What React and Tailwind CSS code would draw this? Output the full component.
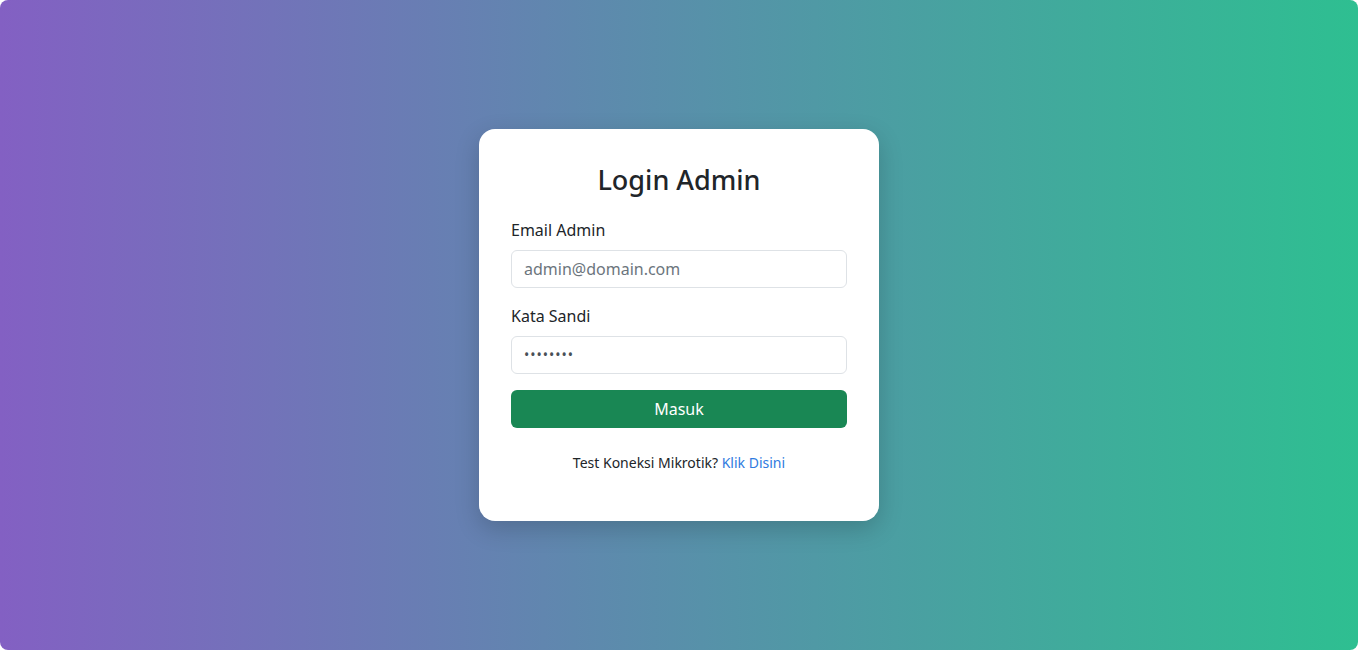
import React, { useState } from 'react';

export default function App() {
  const [email, setEmail] = useState('');
  const [password, setPassword] = useState('rahasia1');

  const handleSubmit = (e) => {
    e.preventDefault();
  };

  return (
    <div className="h-[650px] w-full bg-white" style={{ fontFamily: '"Noto Sans", "Open Sans", sans-serif' }}>
      <div className="flex h-full w-full items-center justify-center rounded-lg bg-[linear-gradient(to_right,#8360c3,#2ebf91)]">
        <div className="w-[400px] rounded-2xl bg-white p-8 shadow-[0_8px_24px_rgba(0,0,0,0.18)]">
          <h3 className="mt-[3px] mb-[21px] text-center text-[27px] leading-[1.2] font-medium text-[#212529]">Login Admin</h3>
          <form onSubmit={handleSubmit}>
            <div className="mb-4">
              <label className="mb-2 block text-base leading-6 text-[#212529]">Email Admin</label>
              <input
                type="email"
                value={email}
                onChange={(e) => setEmail(e.target.value)}
                placeholder="admin@domain.com"
                className="block h-[38px] w-full rounded-md border border-[#dee2e6] px-3 text-base text-[#212529] placeholder:text-[#6c757d] focus:outline-none"
              />
            </div>
            <div className="mb-4">
              <label className="mb-2 block text-base leading-6 text-[#212529]">Kata Sandi</label>
              <input
                type="password"
                value={password}
                onChange={(e) => setPassword(e.target.value)}
                className="block h-[38px] w-full rounded-md border border-[#dee2e6] px-3 text-sm tracking-[1px] text-[#495057] focus:outline-none"
              />
            </div>
            <button type="submit" className="block h-[38px] w-full rounded-md bg-[#198754] text-base text-white">
              Masuk
            </button>
          </form>
          <p className="mt-6 mb-4 text-center text-sm leading-[21px] text-[#212529]">
            Test Koneksi Mikrotik? <a href="#" className="text-[#2f7be0]">Klik Disini</a>
          </p>
        </div>
      </div>
    </div>
  );
}
